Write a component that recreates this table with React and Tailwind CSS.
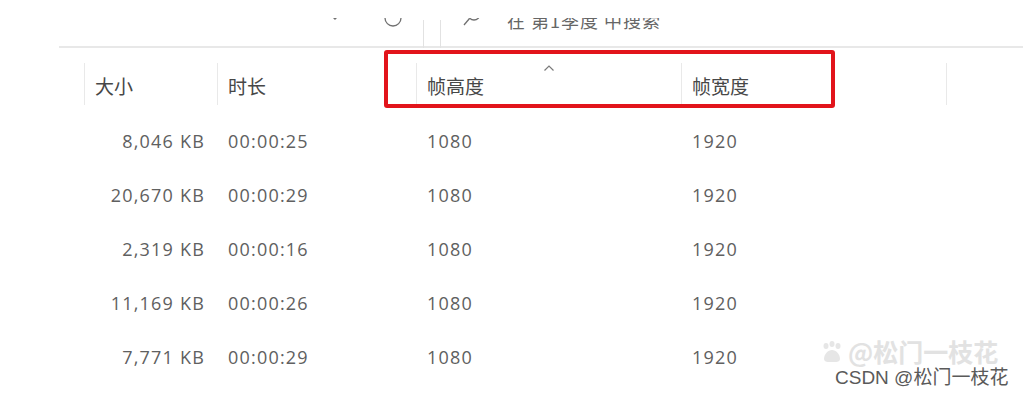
import React from 'react'

const cjk = '"Noto Sans CJK SC", "Noto Sans", sans-serif'
const num = '"Open Sans", "Noto Sans CJK SC", sans-serif'

const rows = [
  { size: '8,046 KB', time: '00:00:25', h: '1080', w: '1920' },
  { size: '20,670 KB', time: '00:00:29', h: '1080', w: '1920' },
  { size: '2,319 KB', time: '00:00:16', h: '1080', w: '1920' },
  { size: '11,169 KB', time: '00:00:26', h: '1080', w: '1920' },
  { size: '7,771 KB', time: '00:00:29', h: '1080', w: '1920' },
]

function HeaderCell({ label, width, children }) {
  return (
    <div className={`relative h-[42px] border-l border-[#e9e9e9] flex items-center pl-[10px] pt-[2px] ${width}`}>
      <span className="text-[19px] leading-none text-[#474747]" style={{ fontFamily: cjk }}>{label}</span>
      {children}
    </div>
  )
}

function Toolbar() {
  return (
    <div className="ml-[59px] h-[48px] border-b-2 border-[#e8e8e8] flex">
      <div className="mt-[18px] h-[30px] flex-1 flex items-start overflow-hidden text-[#6b6b6b]">
        {/* chevron tip */}
        <svg className="ml-[271px] -mt-[6px] shrink-0" width="10" height="10" viewBox="0 0 10 10" fill="none" stroke="#707070" strokeWidth="1.4">
          <polyline points="1,3 5,7 9,3" />
        </svg>
        {/* refresh circle */}
        <svg className="ml-[43px] -mt-[10px] shrink-0" width="20" height="20" viewBox="0 0 20 20" fill="none" stroke="#707070" strokeWidth="1.3">
          <circle cx="10" cy="10" r="8" />
        </svg>
        <div className="ml-[20px] mt-[2px] w-px h-[28px] bg-[#e2e2e2] shrink-0" />
        <div className="ml-[16px] mt-[2px] w-px h-[28px] bg-[#e2e2e2] shrink-0" />
        {/* search icon */}
        <svg className="ml-[21px] -mt-[10px] shrink-0" width="20" height="20" viewBox="0 0 20 20" fill="none" stroke="#707070" strokeWidth="1.3">
          <circle cx="12" cy="6" r="6" />
          <line x1="7.5" y1="10.5" x2="2" y2="17" />
        </svg>
        <span className="ml-[25px] -mt-[7px] text-[18px] leading-[19px] tracking-[1px] whitespace-nowrap text-[#666]" style={{ fontFamily: cjk }}>
          在 第1季度 中搜索
        </span>
      </div>
    </div>
  )
}

export default function App() {
  return (
    <div className="relative w-[1023px] h-[398px] bg-white overflow-hidden">
      <Toolbar />

      {/* column headers */}
      <div className="flex h-[66px] pt-[15px]">
        <div className="w-[84px] shrink-0" />
        <HeaderCell label="大小" width="w-[133px]" />
        <HeaderCell label="时长" width="w-[199px]" />
        <HeaderCell label="帧高度" width="w-[265px]">
          <svg className="absolute top-[1px] left-1/2 -translate-x-1/2" width="12" height="8" viewBox="0 0 12 8" fill="none" stroke="#7a7a7a" strokeWidth="1.2">
            <polyline points="1.5,6.5 6,2 10.5,6.5" />
          </svg>
        </HeaderCell>
        <HeaderCell label="帧宽度" width="w-[265px]" />
        <div className="h-[42px] border-l border-[#e9e9e9] flex-1" />
      </div>

      {/* data rows */}
      <div className="flex flex-col text-[18px] tracking-[1.2px] text-[#606060]" style={{ fontFamily: num }}>
        {rows.map((r, i) => (
          <div key={i} className="flex h-[54px] items-center">
            <div className="w-[84px] shrink-0" />
            <div className="w-[133px] text-right pr-[12px]">{r.size}</div>
            <div className="w-[199px] pl-[11px]">{r.time}</div>
            <div className="w-[265px] pl-[11px]">{r.h}</div>
            <div className="w-[265px] pl-[11px]">{r.w}</div>
          </div>
        ))}
      </div>

      {/* annotation */}
      <div className="absolute left-[384px] top-[50px] w-[451px] h-[58px] border-4 border-[#e2141b] rounded-[3px]" />

      {/* watermark */}
      <div className="absolute left-[820px] top-[339px] flex items-center gap-[4px] text-[#e2e2e2]" style={{ fontFamily: cjk }}>
        <svg width="24" height="22" viewBox="0 0 24 22" fill="#e6e6e6">
          <ellipse cx="6" cy="5" rx="2.5" ry="3" />
          <ellipse cx="12" cy="3" rx="2.5" ry="3" />
          <ellipse cx="18" cy="5" rx="2.5" ry="3" />
          <path d="M4 18c0-5 4-9 8-9s8 4 8 9c0 2-2 3-4 3H8c-2 0-4-1-4-3z" />
        </svg>
        <span className="text-[25px] font-bold leading-none">@松门一枝花</span>
      </div>
      <div className="absolute left-[835px] top-[367px] text-[19px] leading-[22px] text-[#5a5a5a] whitespace-nowrap" style={{ fontFamily: '"Liberation Sans", "Noto Sans CJK SC", sans-serif' }}>
        CSDN @松门一枝花
      </div>
    </div>
  )
}
